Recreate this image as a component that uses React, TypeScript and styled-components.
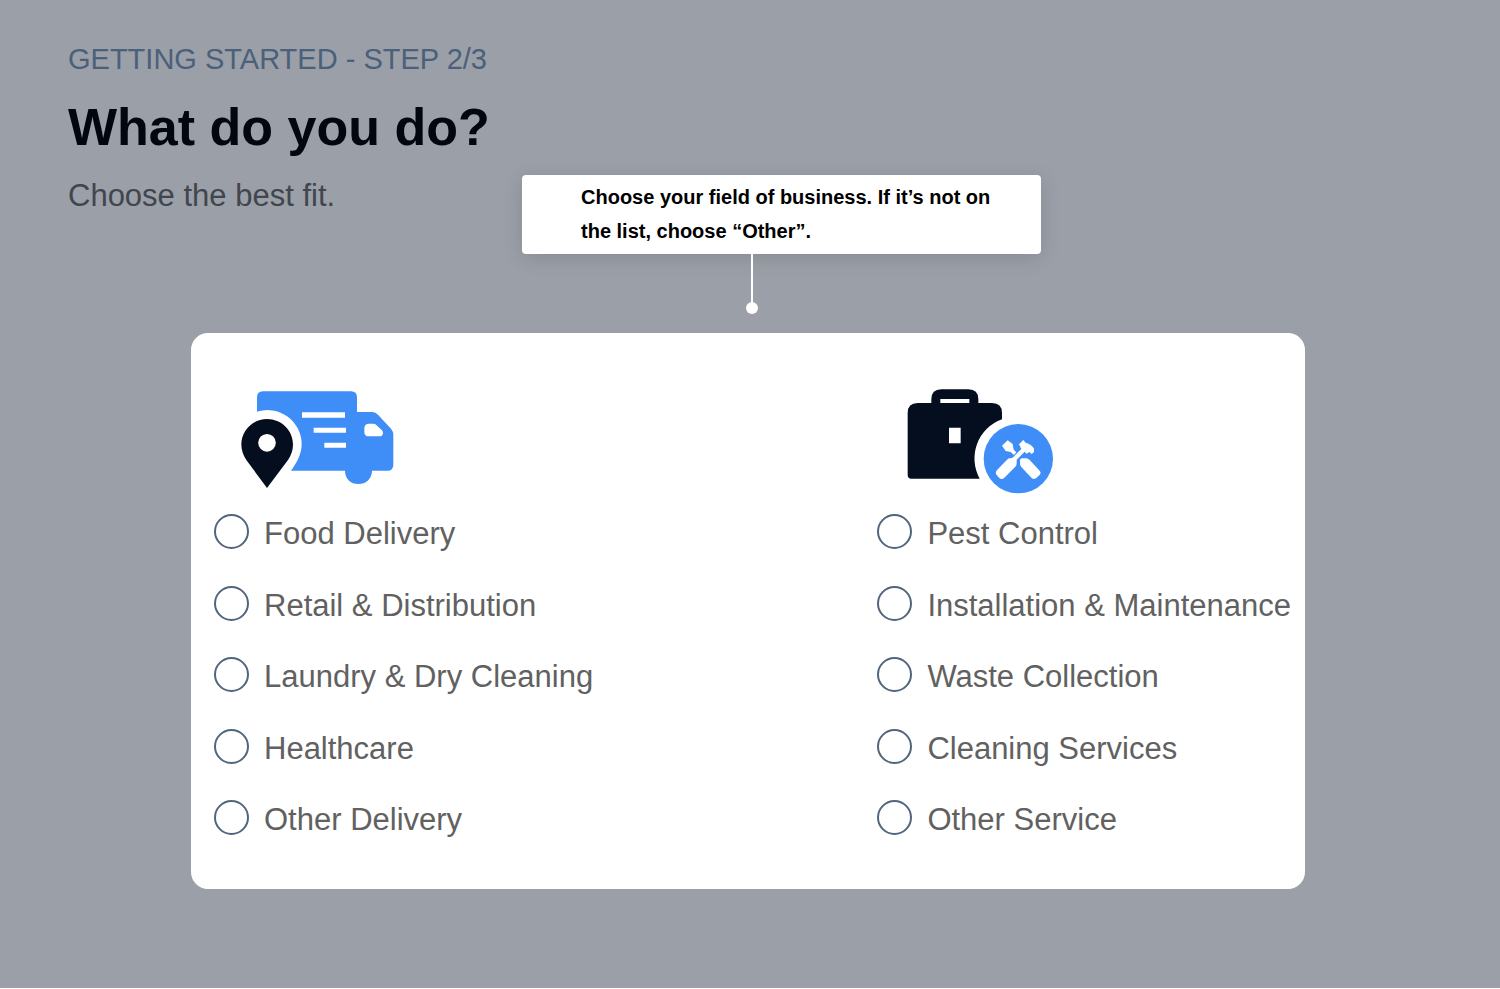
import React from "react";
import styled, { createGlobalStyle } from "styled-components";

const GlobalStyle = createGlobalStyle`
  *, *::before, *::after { box-sizing: border-box; }
  body {
    margin: 0;
    background: #fff;
    font-family: "Liberation Sans", Arial, Helvetica, sans-serif;
  }
`;

const Page = styled.main`
  min-height: 100vh;
  padding: 42px 0 64px;
  background: #9b9fa7;
  border-bottom: 1px solid #fff;
`;

const Header = styled.header`
  display: flex;
  flex-direction: column;
  gap: 20px;
  padding: 0 68px;
`;

const Step = styled.p`
  margin: 0;
  font-size: 29px;
  line-height: 35px;
  color: #4a607b;
`;

const Title = styled.h1`
  margin: 0;
  font-size: 52px;
  line-height: 61px;
  font-weight: 700;
  color: #02060f;
`;

const Subtitle = styled.p`
  margin: 0;
  font-size: 31px;
  line-height: 35px;
  color: #41464e;
`;

const Card = styled.form`
  position: relative;
  display: flex;
  justify-content: space-between;
  margin: 120px 195px 0 191px;
  padding: 56px 14px 54px 23px;
  border-radius: 17px;
  background: #fff;
`;

const Tip = styled.div`
  position: absolute;
  left: 331px;
  bottom: calc(100% + 79px);
  width: 519px;
  padding: 5px 40px 6px 59px;
  border-radius: 4px;
  background: #fff;
  box-shadow: 0 4px 20px rgba(0, 0, 0, 0.13);
  font-size: 20px;
  line-height: 34px;
  font-weight: 700;
  color: #000;

  &::before {
    content: "";
    position: absolute;
    top: 100%;
    left: 229px;
    width: 2px;
    height: 50px;
    background: #fff;
  }

  &::after {
    content: "";
    position: absolute;
    top: calc(100% + 48px);
    left: 224px;
    width: 12px;
    height: 12px;
    border-radius: 50%;
    background: #fff;
  }
`;

const Group = styled.fieldset`
  display: flex;
  flex-direction: column;
  gap: 19px;
  min-width: 0;
  margin: 0;
  padding: 0;
  border: 0;
`;

const GroupIcon = styled.svg`
  display: block;
  width: 160px;
  height: 106px;
  margin-left: 26px;
`;

const Options = styled.div`
  display: flex;
  flex-direction: column;
  justify-content: space-between;
  height: 321px;
`;

const Option = styled.label`
  display: flex;
  align-items: center;
  gap: 15px;
  height: 35px;
  font-size: 31px;
  line-height: 35px;
  color: #616161;
  white-space: nowrap;
  cursor: pointer;
`;

const OptionText = styled.span`
  padding-top: 4px;
`;

const Radio = styled.input`
  appearance: none;
  flex: none;
  width: 35px;
  height: 35px;
  margin: 0;
  border: 2px solid #52657e;
  border-radius: 50%;
  background: #fff;
  cursor: pointer;

  &:checked {
    box-shadow: inset 0 0 0 7px #fff;
    background: #3f8ef8;
  }
`;

const DeliveryIcon = () => (
  <GroupIcon viewBox="60 57 480 318" aria-hidden="true">
    <path
      fill="#3f8ef8"
      d="M111 125V82Q111 64 129 64H393Q411 64 411 82V126H457Q467 126 474 134L513 176Q520 184 520 194V284Q520 302 502 302H456C456 326 438 342 415 342S375 326 375 302H213C230 278 245 253 245 222A103 103 0 0 0 111 125Z"
    />
    <path
      fill="#fff"
      d="M246 127H375V143H246ZM281 173H378V188H281ZM313 218H378V233H313ZM447 161H460Q465 161 469 165L485 180Q489 184 489 188Q489 199 477 199H447Q433 199 433 185V175Q433 161 447 161Z"
    />
    <path
      fill="#040e1e"
      fillRule="evenodd"
      d="M141 147C98 147 64 181 64 224C64 240 70 256 79 270L141 354L204 270C213 256 219 240 219 224C219 181 184 147 141 147ZM141 192A26 26 0 1 1 141 245A26 26 0 1 1 141 192Z"
    />
  </GroupIcon>
);

const ServiceIcon = () => (
  <GroupIcon viewBox="39 57 480 318" aria-hidden="true">
    <path
      fill="#040e1e"
      fillRule="evenodd"
      d="M124 99V88Q124 58 154 58H235Q265 58 265 88V99H306Q336 99 336 129V148A125 125 0 0 0 269 326H64Q53 326 53 315V129Q53 99 83 99ZM151 87V99H238V87ZM177 173V220H212V173Z"
    />
    <circle cx="385" cy="266" r="104" fill="#3f8ef8" />
    <g fill="#fff">
      <path d="M336 227L353 211L368 222L371 239L379 247L372 255L362 246L347 243Z" />
      <path d="M387 223L400 210L407 218Q425 222 432 236L432 246L425 252L418 246L410 251L404 245L380 269V281Q380 286 376 290L343 323Q335 331 327 323L320 315Q314 307 322 299L351 269Q355 265 361 265L368 263L394 237Z" />
      <path d="M396 265H409Q414 265 419 270L447 300Q456 309 448 316L440 323Q432 330 424 323L396 293Q390 287 390 282V271Q390 265 396 265Z" />
    </g>
  </GroupIcon>
);

const groups = [
  {
    name: "Delivery",
    Icon: DeliveryIcon,
    options: [
      "Food Delivery",
      "Retail & Distribution",
      "Laundry & Dry Cleaning",
      "Healthcare",
      "Other Delivery",
    ],
  },
  {
    name: "Services",
    Icon: ServiceIcon,
    options: [
      "Pest Control",
      "Installation & Maintenance",
      "Waste Collection",
      "Cleaning Services",
      "Other Service",
    ],
  },
];

export default function App() {
  return (
    <>
      <GlobalStyle />
      <Page>
        <Header>
          <Step>GETTING STARTED - STEP 2/3</Step>
          <Title>What do you do?</Title>
          <Subtitle>Choose the best fit.</Subtitle>
        </Header>
        <Card>
          <Tip role="note">
            Choose your field of business. If it’s not on the list, choose “Other”.
          </Tip>
          {groups.map(({ name, Icon, options }) => (
            <Group key={name} aria-label={name}>
              <Icon />
              <Options>
                {options.map((option) => (
                  <Option key={option}>
                    <Radio type="radio" name="business" value={option} />
                    <OptionText>{option}</OptionText>
                  </Option>
                ))}
              </Options>
            </Group>
          ))}
        </Card>
      </Page>
    </>
  );
}
